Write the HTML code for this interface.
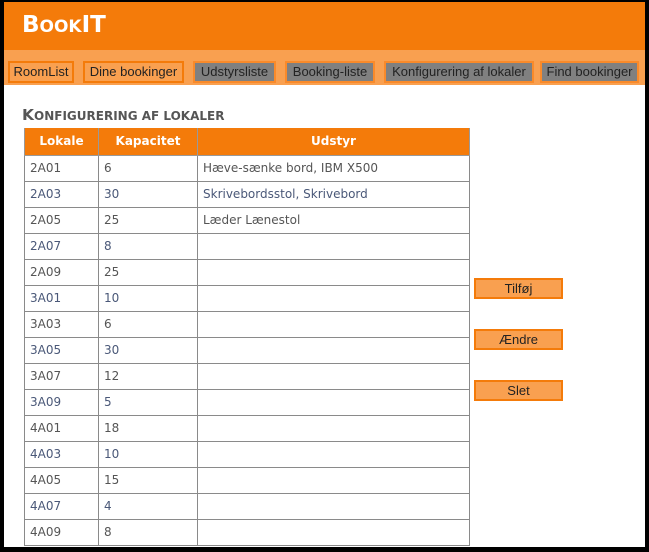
<!DOCTYPE html>
<html><head><meta charset="utf-8"><style>
*{margin:0;padding:0;box-sizing:border-box}
body{width:649px;height:552px;background:#000;position:relative;overflow:hidden;font-family:"DejaVu Sans","Liberation Sans",sans-serif}
#page{position:absolute;left:4px;top:2px;width:641px;height:545px;background:#fff;overflow:hidden}
#hdr{position:absolute;left:0;top:0;width:641px;height:48px;background:#f47b0a}
#hdr h1{position:absolute;left:18px;top:10px;color:#fff;font:bold 23px "DejaVu Sans",sans-serif}
#hdr h1 small{font-size:17px}
#nav{position:absolute;left:0;top:48px;width:641px;height:35px;background:#f9a050}
.nb{position:absolute;top:11px;height:22px;border:2px solid #f47b0a;background:#f9a050;font:13px "Liberation Sans",sans-serif;color:#222;text-align:center;line-height:18px}
.g{background:#808080;border-color:#f98a2a}
h2{position:absolute;left:18px;top:104px;color:#555;font:bold 15.5px "DejaVu Sans",sans-serif}
h2 small{font-size:12px}
table{position:absolute;left:20px;top:126px;border-collapse:collapse;font:12px "DejaVu Sans",sans-serif}
th{background:#f47b0a;color:#fff;height:27px;font-weight:bold;font-size:12px;border:1px solid #999;border-top:none}
td{height:26px;border:1px solid #8a8a8a;padding-left:5px;color:#555}
tr.b td{color:#4a5878}
.btn{position:absolute;left:470px;width:89px;height:21px;background:#f9a050;border:2px solid #f47b0a;font:13px "Liberation Sans",sans-serif;color:#222;text-align:center;line-height:17px}
</style></head><body><div id="page">
<div id="hdr"><h1>B<small>OOK</small>IT</h1></div>
<div id="nav">
<div class="nb" style="left:4px;width:66px">RoomList</div>
<div class="nb" style="left:79px;width:101px">Dine bookinger</div>
<div class="nb g" style="left:189px;width:83px">Udstyrsliste</div>
<div class="nb g" style="left:281px;width:90px">Booking-liste</div>
<div class="nb g" style="left:380px;width:150px">Konfigurering af lokaler</div>
<div class="nb g" style="left:536px;width:99px">Find bookinger</div>
</div>
<h2>K<small>ONFIGURERING AF LOKALER</small></h2>
<table>
<tr><th style="width:74px">Lokale</th><th style="width:99px">Kapacitet</th><th style="width:272px">Udstyr</th></tr>
<tr><td>2A01</td><td>6</td><td>Hæve-sænke bord, IBM X500</td></tr>
<tr class="b"><td>2A03</td><td>30</td><td>Skrivebordsstol, Skrivebord</td></tr>
<tr><td>2A05</td><td>25</td><td>Læder Lænestol</td></tr>
<tr class="b"><td>2A07</td><td>8</td><td></td></tr>
<tr><td>2A09</td><td>25</td><td></td></tr>
<tr class="b"><td>3A01</td><td>10</td><td></td></tr>
<tr><td>3A03</td><td>6</td><td></td></tr>
<tr class="b"><td>3A05</td><td>30</td><td></td></tr>
<tr><td>3A07</td><td>12</td><td></td></tr>
<tr class="b"><td>3A09</td><td>5</td><td></td></tr>
<tr><td>4A01</td><td>18</td><td></td></tr>
<tr class="b"><td>4A03</td><td>10</td><td></td></tr>
<tr><td>4A05</td><td>15</td><td></td></tr>
<tr class="b"><td>4A07</td><td>4</td><td></td></tr>
<tr><td>4A09</td><td>8</td><td></td></tr>
</table>
<div class="btn" style="top:276px">Tilføj</div>
<div class="btn" style="top:327px">Ændre</div>
<div class="btn" style="top:378px">Slet</div>
</div></body></html>
